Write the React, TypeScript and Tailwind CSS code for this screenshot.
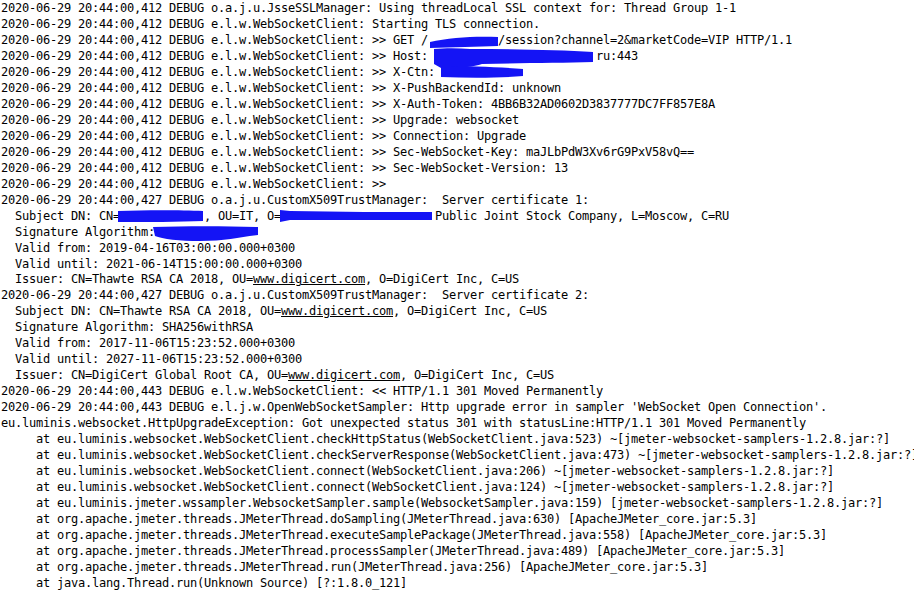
import React from "react";

type Seg = string | { u: string };

const P = "2020-06-29 20:44:00,412 DEBUG e.l.w.WebSocketClient: ";
const T = "     at ";

const lines: Seg[][] = [
  ["2020-06-29 20:44:00,412 DEBUG o.a.j.u.JsseSSLManager: Using threadLocal SSL context for: Thread Group 1-1"],
  [P + "Starting TLS connection."],
  [P + ">> GET /          /session?channel=2&marketCode=VIP HTTP/1.1"],
  [P + ">> Host:                        ru:443"],
  [P + ">> X-Ctn:"],
  [P + ">> X-PushBackendId: unknown"],
  [P + ">> X-Auth-Token: 4BB6B32AD0602D3837777DC7FF857E8A"],
  [P + ">> Upgrade: websocket"],
  [P + ">> Connection: Upgrade"],
  [P + ">> Sec-WebSocket-Key: maJLbPdW3Xv6rG9PxV58vQ=="],
  [P + ">> Sec-WebSocket-Version: 13"],
  [P + ">>"],
  ["2020-06-29 20:44:00,427 DEBUG o.a.j.u.CustomX509TrustManager:  Server certificate 1:"],
  ["  Subject DN: CN=            , OU=IT, O=                      Public Joint Stock Company, L=Moscow, C=RU"],
  ["  Signature Algorithm:"],
  ["  Valid from: 2019-04-16T03:00:00.000+0300"],
  ["  Valid until: 2021-06-14T15:00:00.000+0300"],
  ["  Issuer: CN=Thawte RSA CA 2018, OU=", { u: "www.digicert.com" }, ", O=DigiCert Inc, C=US"],
  ["2020-06-29 20:44:00,427 DEBUG o.a.j.u.CustomX509TrustManager:  Server certificate 2:"],
  ["  Subject DN: CN=Thawte RSA CA 2018, OU=", { u: "www.digicert.com" }, ", O=DigiCert Inc, C=US"],
  ["  Signature Algorithm: SHA256withRSA"],
  ["  Valid from: 2017-11-06T15:23:52.000+0300"],
  ["  Valid until: 2027-11-06T15:23:52.000+0300"],
  ["  Issuer: CN=DigiCert Global Root CA, OU=", { u: "www.digicert.com" }, ", O=DigiCert Inc, C=US"],
  ["2020-06-29 20:44:00,443 DEBUG e.l.w.WebSocketClient: << HTTP/1.1 301 Moved Permanently"],
  ["2020-06-29 20:44:00,443 DEBUG e.l.j.w.OpenWebSocketSampler: Http upgrade error in sampler 'WebSocket Open Connection'."],
  ["eu.luminis.websocket.HttpUpgradeException: Got unexpected status 301 with statusLine:HTTP/1.1 301 Moved Permanently"],
  [T + "eu.luminis.websocket.WebSocketClient.checkHttpStatus(WebSocketClient.java:523) ~[jmeter-websocket-samplers-1.2.8.jar:?]"],
  [T + "eu.luminis.websocket.WebSocketClient.checkServerResponse(WebSocketClient.java:473) ~[jmeter-websocket-samplers-1.2.8.jar:?]"],
  [T + "eu.luminis.websocket.WebSocketClient.connect(WebSocketClient.java:206) ~[jmeter-websocket-samplers-1.2.8.jar:?]"],
  [T + "eu.luminis.websocket.WebSocketClient.connect(WebSocketClient.java:124) ~[jmeter-websocket-samplers-1.2.8.jar:?]"],
  [T + "eu.luminis.jmeter.wssampler.WebsocketSampler.sample(WebsocketSampler.java:159) [jmeter-websocket-samplers-1.2.8.jar:?]"],
  [T + "org.apache.jmeter.threads.JMeterThread.doSampling(JMeterThread.java:630) [ApacheJMeter_core.jar:5.3]"],
  [T + "org.apache.jmeter.threads.JMeterThread.executeSamplePackage(JMeterThread.java:558) [ApacheJMeter_core.jar:5.3]"],
  [T + "org.apache.jmeter.threads.JMeterThread.processSampler(JMeterThread.java:489) [ApacheJMeter_core.jar:5.3]"],
  [T + "org.apache.jmeter.threads.JMeterThread.run(JMeterThread.java:256) [ApacheJMeter_core.jar:5.3]"],
  [T + "java.lang.Thread.run(Unknown Source) [?:1.8.0_121]"],
];

export default function App() {
  return (
    <div className="relative w-[914px] h-[591px] overflow-hidden bg-white">
      <div
        className="pl-[1px] pt-[1px] text-[12px] leading-[15.97px] tracking-[-0.224px] text-black whitespace-pre"
        style={{ fontFamily: '"DejaVu Sans Mono", "Liberation Mono", monospace' }}
      >
        {lines.map((segs, i) => (
          <div key={i}>
            {segs.map((s, j) =>
              typeof s === "string" ? (
                <span key={j}>{s}</span>
              ) : (
                <span key={j} className="underline">
                  {s.u}
                </span>
              )
            )}
          </div>
        ))}
      </div>
      <svg
        className="absolute left-0 top-0 pointer-events-none"
        width="914"
        height="591"
        viewBox="0 0 914 591"
      >
        <g fill="#1414f5">
          <path d="M430,42 C450,37 478,36 498,37 L498,46 C478,47 452,47 430,48 Z" />
          <path d="M434,49 C445,48 458,48 470,49 C515,49 560,50 593,52 L593,62 C560,63 520,63 482,64 C472,67 456,69 441,68 L434,64 Z" />
          <path d="M441,66 C470,66 500,67 523,69 L523,76 C500,78 470,78 441,77 Z" />
          <path d="M118,211 C145,210 180,210 203,211 L203,221 C180,222 145,222 118,222 Z" />
          <path d="M280,210 L290,211 C340,212 390,212 432,212 L432,220 C390,220 340,220 290,220 L280,222 Z" />
          <path d="M153,227 C185,226 225,226 258,227 L258,235 C240,237 225,241 200,241 C180,241 162,239 155,236 Z" />
        </g>
      </svg>
    </div>
  );
}
